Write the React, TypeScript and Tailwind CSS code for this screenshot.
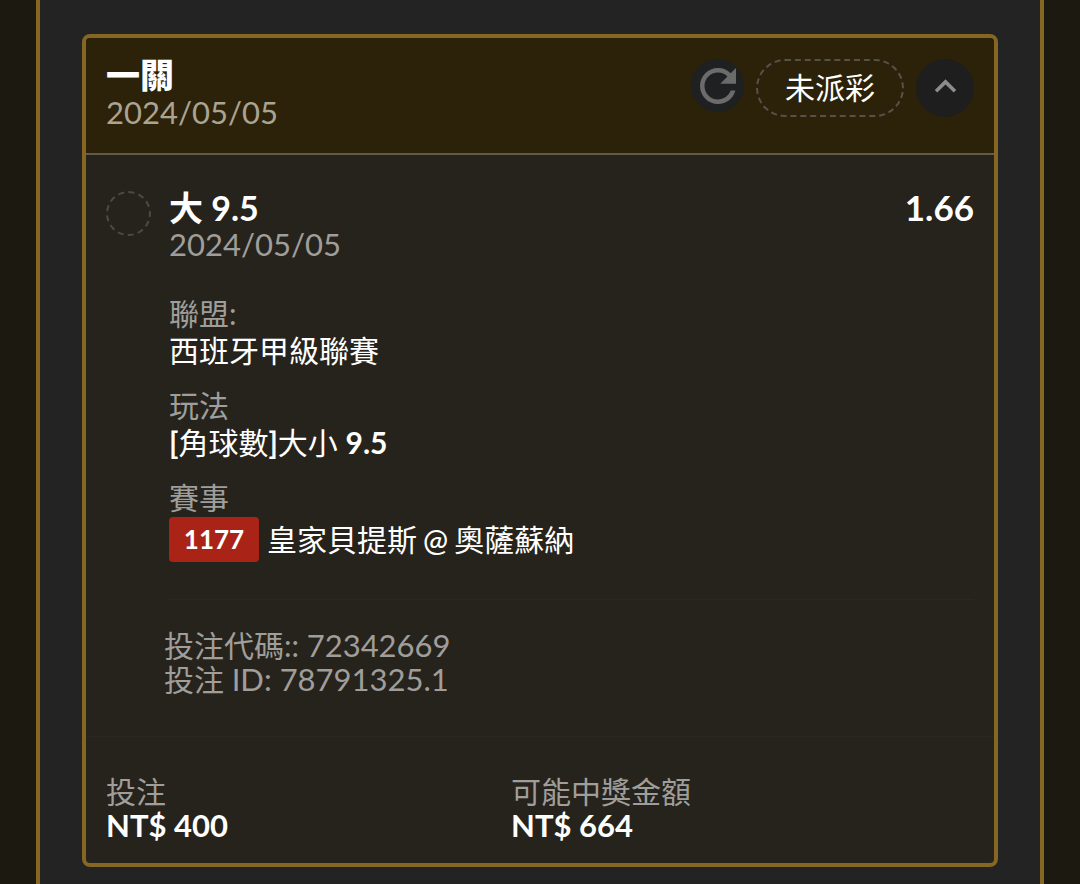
import React from 'react';
import { MdKeyboardArrowUp, MdRefresh } from 'react-icons/md';

const bet = {
  title: '一關',
  date: '2024/05/05',
  status: '未派彩',
  odds: '1.66',
  code: '72342669',
  id: '78791325.1',
};

function Num({ children }: { children: React.ReactNode }) {
  return <span className="text-[31px]">{children}</span>;
}

export default function App() {
  return (
    <div className="min-h-screen flex bg-[#1c1911] px-9 font-['Lato','Noto_Sans_CJK_TC',sans-serif] text-[30px] leading-[37px] text-white">
      <main className="flex-1 bg-[#232323] border-x-4 border-[#856623] px-[42px] pt-[34px] pb-4">
        <article className="border-4 border-[#856623] rounded-lg bg-[#26231d] overflow-hidden">
          <header className="flex items-start justify-between px-5 pt-[18px] pb-[22px] bg-[#2c2209] border-b-2 border-[#625b48]">
            <div>
              <h1 className="text-[34px] leading-[38px] font-black">{bet.title}</h1>
              <time className="block text-[#aaa493]"><Num>{bet.date}</Num></time>
            </div>
            <div className="flex items-start gap-3 pt-[3px]">
              <button type="button" aria-label="重新整理" className="w-[53px] h-[53px] rounded-full bg-[#1f2022] text-[#6b6b6b] flex items-center justify-center">
                <MdRefresh className="w-[54px] h-[54px] shrink-0" />
              </button>
              <span className="h-[58px] px-[27px] pb-0.5 rounded-full border-2 border-dashed border-[#56524a] flex items-center">
                {bet.status}
              </span>
              <button type="button" aria-label="收合" className="w-[58px] h-[58px] pb-[3px] rounded-full bg-[#1e1e1e] text-[#8c8c8c] flex items-center justify-center">
                <MdKeyboardArrowUp className="w-[43px] h-[43px]" />
              </button>
            </div>
          </header>

          <section className="flex items-start gap-[18px] px-5 pt-[34px]">
            <span className="w-[45px] h-[45px] mt-0.5 shrink-0 rounded-full border-2 border-dashed border-[#4c4a46]" />
            <div className="flex-1">
              <div className="flex items-center justify-between font-bold">
                <h2 className="text-[34px]">大 9.5</h2>
                <span className="text-[35px]">{bet.odds}</span>
              </div>
              <time className="block text-[#a09e9a]"><Num>{bet.date}</Num></time>

              <dl className="pt-8 pb-[37px] flex flex-col gap-[18px] border-b border-[#2a2823]">
                <div>
                  <dt className="text-[#a09e9a]">聯盟:</dt>
                  <dd>西班牙甲級聯賽</dd>
                </div>
                <div>
                  <dt className="text-[#a09e9a]">玩法</dt>
                  <dd><b>[</b>角球數<b>]</b>大小 <b>9.5</b></dd>
                </div>
                <div>
                  <dt className="text-[#a09e9a]">賽事</dt>
                  <dd className="flex items-center gap-2 pt-px">
                    <span className="h-[45px] w-[90px] rounded-sm bg-[#a92317] flex items-center justify-center text-[26px] font-bold">1177</span>
                    <span className="flex gap-[6px]">
                      <span>皇家貝提斯</span>
                      <span className="font-medium">@</span>
                      <span>奧薩蘇納</span>
                    </span>
                  </dd>
                </div>
              </dl>
            </div>
          </section>

          <section className="pl-[78px] pr-5 pt-7 pb-10 leading-[34px] text-[#a09e9a]">
            <p>投注代碼:: <Num>{bet.code}</Num></p>
            <p>投注 <Num>ID: {bet.id}</Num></p>
          </section>

          <footer className="px-5 pt-[37px] pb-[21px] border-t border-[#2a2823] leading-[34px]">
            <dl className="grid grid-cols-[7fr_8fr]">
              <div>
                <dt className="text-[#a09e9a]">投注</dt>
                <dd className="font-bold"><Num>NT$ 400</Num></dd>
              </div>
              <div>
                <dt className="text-[#a09e9a]">可能中獎金額</dt>
                <dd className="font-bold"><Num>NT$ 664</Num></dd>
              </div>
            </dl>
          </footer>
        </article>
      </main>
    </div>
  );
}
